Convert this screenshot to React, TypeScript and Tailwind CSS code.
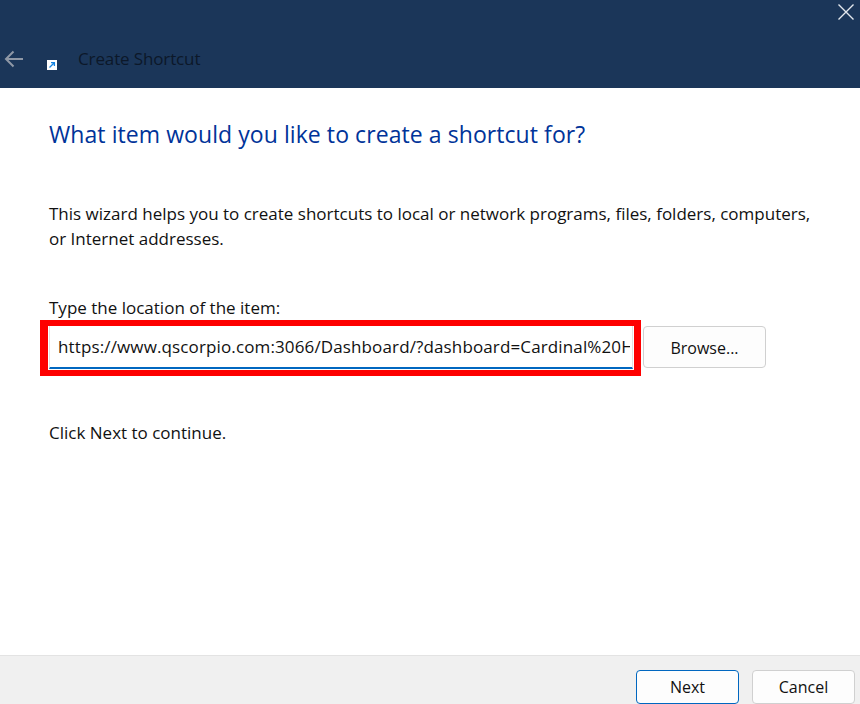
const font = "font-['Open_Sans','Noto_Sans',sans-serif]";

export default function App() {
  return (
    <div className={`flex h-[704px] w-[860px] flex-col overflow-hidden bg-white text-[17px] text-[#111] ${font}`}>
      {/* Header */}
      <div className="flex h-[88px] shrink-0 bg-[#1b3659]">
        <div className="flex flex-1 items-end pb-[19px]">
          <svg viewBox="0 0 20 18" className="mb-[1px] ml-[4px] h-[18px] w-[20px]">
            <path d="M19 9 H2 M9.5 1.5 L2 9 L9.5 16.5" fill="none" stroke="#8f98a6" strokeWidth="2" />
          </svg>
          <div className="mb-[-1px] ml-[23px] flex h-[10px] w-[10px] items-center justify-center bg-white">
            <svg viewBox="0 0 10 10" className="h-[10px] w-[10px]">
              <path d="M2.5 7.5 L7 3 M4 2.6 H7.4 V6" fill="none" stroke="#1583e0" strokeWidth="1.3" />
            </svg>
          </div>
          <span className="mb-[-1px] ml-[21px] text-[17px] leading-[22px] tracking-[-0.13px] text-[#0c1829]">Create Shortcut</span>
        </div>
        <svg viewBox="0 0 16 16" className="mr-[6px] mt-[4px] h-[16px] w-[16px]">
          <path d="M0.5 0.5 L15.5 15.5 M15.5 0.5 L0.5 15.5" fill="none" stroke="#e4e8ee" strokeWidth="1.4" />
        </svg>
      </div>

      {/* Content */}
      <div className="flex-1 pl-[40px] pt-[29px]">
        <h1 className="ml-[9px] text-[23px] leading-[34px] tracking-[0.07px] text-[#003399]">What item would you like to create a shortcut for?</h1>
        <p className="ml-[9px] mt-[50px] w-[800px] leading-[25px]">
          This wizard helps you to create shortcuts to local or network programs, files, folders, computers,
          <br />
          or Internet addresses.
        </p>
        <label className="ml-[9px] mt-[45px] block leading-[24px]">Type the location of the item:</label>
        <div className="flex items-start">
          <div className="h-[56px] w-[601px] border-[6px] border-l-[8px] border-r-[7px] border-[#fe0000] bg-white">
            <div className="ml-[1px] mr-[1px] flex h-[43px] items-center border-b-2 border-l border-r border-b-[#0067c0] border-l-[#e2e2e2] border-r-[#e2e2e2] pl-[8px] pr-[2px]">
              <input
                readOnly
                value="https://www.qscorpio.com:3066/Dashboard/?dashboard=Cardinal%20Health"
                className="w-full bg-transparent tracking-[0.13px] outline-none"
              />
            </div>
          </div>
          <button className="ml-[2px] mt-[6px] h-[42px] w-[123px] rounded-[4px] border border-[#d0d0d0] bg-[#fdfdfd] pt-[1px] text-[16px]">Browse...</button>
        </div>
        <p className="ml-[9px] mt-[44px] leading-[26px]">Click Next to continue.</p>
      </div>

      {/* Footer */}
      <div className="flex h-[49px] shrink-0 items-start justify-end gap-[13px] border-t border-[#e3e3e3] bg-[#f0f0f0] pr-[5px] pt-[14px]">
        <button className="h-[34px] w-[103px] rounded-[4px] border border-[#0067c0] bg-[#fdfdfd] text-[16px]">Next</button>
        <button className="h-[34px] w-[103px] rounded-[4px] border border-[#d0d0d0] bg-[#fdfdfd] text-[16px]">Cancel</button>
      </div>
    </div>
  );
}
